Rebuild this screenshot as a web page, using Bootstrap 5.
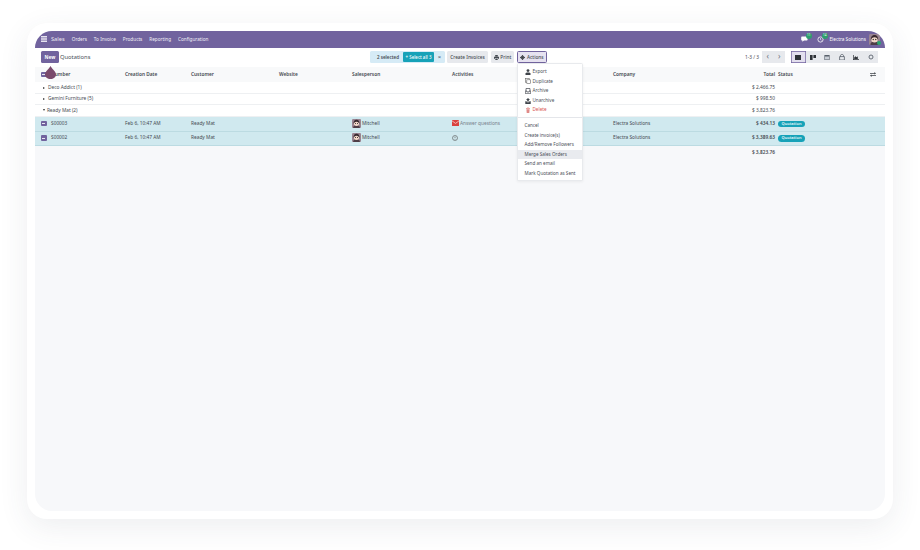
<!DOCTYPE html>
<html lang="en">
<head>
  <meta charset="UTF-8">
  <meta name="viewport" content="width=device-width, initial-scale=1.0">
  <title>Quotations</title>
  <link href="https://cdn.jsdelivr.net/npm/bootstrap@5.3.2/dist/css/bootstrap.min.css" rel="stylesheet">
  <style>
    html, body { height: 550px; overflow: hidden; }
    body { background: #fff; font-family: "Noto Sans", sans-serif; font-size: 4.8px; color: #454a51; }
    .frame { width: 866px; height: 496px; margin: 23px 0 0 27px; padding: 8px; background: #fff; border-radius: 20px; box-shadow: 0 8px 30px rgba(60,70,90,.09); }
    .screen { position: relative; height: 480px; background: #f7f8fa; border-radius: 17px; overflow: hidden; }
    .topbar { height: 16.5px; background: #71639e; color: #fff; padding: 0 5px 0 6px; font-size: 4.7px; }
    .topbar span { white-space: nowrap; }
    .brand { font-size: 5.7px; margin: 0 7px 0 4px; opacity: .85; }
    .menu-item { margin-right: 6.9px; opacity: .9; }
    .tool-badge { position: absolute; top: -2.5px; right: -4.5px; width: 6.5px; height: 5.5px; background: #2f9e6e; border-radius: 3px; font-size: 3px !important; line-height: 5.5px; text-align: center; color: #fff; }
    .tool-icon { position: relative; display: flex; width: 7px; height: 7px; }
    .gap-chat { margin-right: 9px; }
    .gap-clock { margin-right: 6px; }
    .panel { height: 19.5px; background: #fff; padding: 0 7px 0 6px; }
    .left-part { width: 329px; }
    .btn-new { width: 18px; height: 12px; padding: 0; font-size: 4.8px; font-weight: 700; line-height: 12px; background: #71639e; border: 0; border-radius: 1.5px; color: #fff; }
    .page-title { font-size: 5.8px; margin-left: 1px; color: #4a4f57; }
    .sel-box { width: 75px; height: 12px; background: #d6ebf6; border-radius: 1.5px; font-weight: 600; font-size: 4.5px; }
    .sel-count { width: 33px; text-align: right; padding-right: 4px; }
    .sel-all { width: 31px; height: 10px; background: #17a2b8; color: #fff; border-radius: 1px; line-height: 10px; text-align: center; font-size: 4.4px; font-weight: 500; }
    .sel-x { width: 11px; text-align: center; font-size: 6px; color: #5a6a85; }
    .btn-soft { height: 12px; padding: 0; font-size: 4.7px; line-height: 12px; background: #e7e9ed; border: 0; border-radius: 1.5px; color: #454a51; font-weight: 500; margin-left: 2px; display: inline-flex; align-items: center; justify-content: center; gap: 1.5px; }
    .w-inv { width: 41px; }
    .w-print { width: 23px; margin-left: 3px; }
    .w-act { width: 30px; margin-left: 3px; background: #e6e2f0; border: .7px solid #71639e; }
    .pager-txt { margin-right: 3px; }
    .pager-btn { width: 11.5px; height: 12px; background: #e7e9ed; text-align: center; line-height: 10.5px; font-size: 8px; color: #6b7280; }
    .view-group { margin-left: 6px; }
    .view-btn { width: 14.5px; height: 12px; background: #e7e9ed; display: flex; align-items: center; justify-content: center; }
    .view-btn.on { background: #e3dfee; box-shadow: inset 0 0 0 .7px #71639e; }
    table.quote { width: 850px; table-layout: fixed; border-collapse: separate; border-spacing: 0; margin: 0; font-size: 4.8px; }
    table.quote td, table.quote th { padding: 0; white-space: nowrap; vertical-align: middle; background: transparent; color: #454a51; box-shadow: none; border-bottom: 1px solid #eef0f2; }
    table.quote thead tr { height: 15px; }
    table.quote thead th { background: #f8f9fa; font-weight: 600; border: 0; }
    tr.grp { height: 11.7px; background: #fff; }
    tr.sel { height: 14.6px; background: #d0e9ef; }
    table.quote tr.sel td { border-bottom: 1px solid #bcdbe2; padding-bottom: 1px; }
    table.quote tr.foot td { border: 0; height: 12px; font-weight: 600; }
    .c-chk { width: 16px; } .c-num { width: 74px; } .c-date { width: 66px; } .c-cust { width: 88px; }
    .c-web { width: 73px; } .c-sale { width: 100px; } .c-act { width: 161px; } .c-comp { width: 87px; }
    .c-tot { width: 75px; } .c-stat { width: 95px; } .c-opt { width: 15px; }
    .tick { display: block; width: 5.5px; height: 5.5px; margin-left: 6px; background: #71639e; border-radius: 1px; position: relative; }
    .tick::after { content: ""; position: absolute; left: 1.3px; right: 1.3px; top: 2.3px; height: 1px; background: #e8e6f2; }
    .caret-r { display: inline-block; margin: 0 3px 0 8px; border-left: 2.5px solid #333; border-top: 1.6px solid transparent; border-bottom: 1.6px solid transparent; }
    .caret-d { display: inline-block; margin: 0 2.4px 1px 7.5px; border-top: 2.5px solid #333; border-left: 1.8px solid transparent; border-right: 1.8px solid transparent; }
    .state-pill { display: inline-block; width: 27px; height: 6.5px; line-height: 6.5px; border-radius: 4px; background: #17a2b8; color: #e8f8fb; font-size: 4px; text-align: center; margin-left: 3px; font-weight: 600; }
    .who { gap: 1px; }
    .muted-act { color: #77808a; }
    .pad-stat { padding-left: 3px !important; }
    .drip { position: absolute; left: 9.5px; top: 35px; width: 11px; height: 13px; }
    .act-menu { position: absolute; display: block; left: 481.5px; top: 32px; width: 66.5px; min-width: 0; height: 117.5px; padding: 3px 0 0; border: .6px solid #e8eaed; border-radius: 1.5px; box-shadow: 0 1px 3px rgba(0,0,0,.06); }
    .act-menu .dropdown-item { height: 9.6px; line-height: 9.6px; padding: 0 0 0 7px; font-size: 4.6px; color: #4b5057; display: flex; align-items: center; gap: 2px; }
    .act-menu .dropdown-item.hot { background: #e9ebef; }
    .act-menu .dropdown-item.danger { color: #d9534f; }
    .act-menu .dropdown-divider { margin: 2.4px 0 2.6px; border-color: #e4e6ea; opacity: 1; }
  </style>
</head>
<body>
  <svg width="0" height="0" class="position-absolute">
    <defs>
      <symbol id="face" viewBox="0 0 12 12">
        <rect width="12" height="12" rx="1.500" fill="#9a8491"/>
        <path d="M1.500 12c0-3 2-3.800 4.500-3.800s4.500.8 4.500 3.800z" fill="#4e3d46"/>
        <circle cx="6" cy="5.800" r="3.500" fill="#f3d8c9"/>
        <path d="M2.100 7C1.600 2.600 3.800 1 6 1s4.400 1.600 3.900 6C9.400 4.800 8.200 3.600 6 3.600S2.600 4.800 2.100 7z" fill="#3a2a30"/>
        <circle cx="4.600" cy="6" r=".7" fill="#222"/><circle cx="7.400" cy="6" r=".7" fill="#222"/>
      </symbol>
    </defs>
  </svg>

  <div class="frame">
    <div class="screen">
      <div class="topbar d-flex align-items-center">
        <svg width="6" height="6" viewBox="0 0 6 6"><path d="M0 0h6v1.400H0zM0 2.300h6v1.400H0zM0 4.600h6V6H0z" fill="#e6e3f0"/></svg>
        <span class="brand">Sales</span>
        <span class="menu-item">Orders</span>
        <span class="menu-item">To Invoice</span>
        <span class="menu-item">Products</span>
        <span class="menu-item">Reporting</span>
        <span class="menu-item">Configuration</span>
        <div class="ms-auto d-flex align-items-center">
          <div class="tool-icon gap-chat">
            <svg width="7" height="6" viewBox="0 0 7 6"><path d="M1.200.6h4.400c.6 0 1 .4 1 1v2c0 .6-.4 1-1 1H3L1.400 5.800V4.600h-.2c-.6 0-1-.4-1-1v-2c0-.6.4-1 1-1z" fill="#fff"/></svg>
            <span class="tool-badge">11</span>
          </div>
          <div class="tool-icon gap-clock">
            <svg width="7" height="7" viewBox="0 0 7 7"><circle cx="3.500" cy="3.500" r="2.600" fill="none" stroke="#fff" stroke-width=".8"/><path d="M3.500 2v1.600l1 .6" fill="none" stroke="#fff" stroke-width=".6"/></svg>
            <span class="tool-badge">14</span>
          </div>
          <span>Electra Solutions</span>
          <div class="tool-icon" style="width:11px;height:11px;margin-left:3px">
            <svg width="11" height="11"><use href="#face"/></svg>
            <span class="position-absolute rounded-circle" style="width:4px;height:4px;right:-.5px;bottom:-.5px;background:#2aa56f"></span>
          </div>
        </div>
      </div>

      <div class="panel d-flex align-items-center">
        <div class="left-part d-flex align-items-center">
          <button class="btn btn-new">New</button>
          <span class="page-title">Quotations</span>
        </div>
        <div class="d-flex align-items-center">
          <div class="sel-box d-flex align-items-center">
            <span class="sel-count">2 selected</span>
            <span class="sel-all">+ Select all 3</span>
            <span class="sel-x">×</span>
          </div>
          <button class="btn btn-soft w-inv">Create Invoices</button>
          <button class="btn btn-soft w-print"><svg width="5" height="5" viewBox="0 0 5 5"><path d="M1.200 0h2.600v1.400H1.200zM0 1.800h5v2H4V3H1v.8H0zM1.300 3.400h2.400V5H1.300z" fill="#454a51"/></svg>Print</button>
          <button class="btn btn-soft w-act"><svg width="5" height="5" viewBox="0 0 5 5"><circle cx="2.500" cy="2.500" r="1.500" fill="none" stroke="#2f3338" stroke-width="1"/><path d="M2.500 0v5M0 2.500h5" stroke="#2f3338" stroke-width=".7"/></svg>Actions</button>
        </div>
        <div class="ms-auto d-flex align-items-center">
          <span class="pager-txt">1-3 / 3</span>
          <span class="pager-btn">‹</span><span class="pager-btn">›</span>
          <div class="view-group d-flex">
            <span class="view-btn on"><svg width="6" height="5" viewBox="0 0 6 5"><rect width="6" height="5" fill="#2f3338"/></svg></span>
            <span class="view-btn"><svg width="6" height="5" viewBox="0 0 6 5"><path d="M0 0h2.600v5H0zM3.400 0H6v3H3.400z" fill="#2f3338"/></svg></span>
            <span class="view-btn"><svg width="6" height="6" viewBox="0 0 6 6"><path d="M.4 1h5.200v5H.4z" fill="#59616b"/><path d="M1 2.400h4v3H1z" fill="#c9ced6"/></svg></span>
            <span class="view-btn"><svg width="6" height="6" viewBox="0 0 6 6"><path d="M1.500 2.600V1.600C1.500.8 2.200.4 3 .4s1.500.4 1.500 1.200v1M.6 2.600h4.800V6H.6z" fill="none" stroke="#59616b" stroke-width=".8"/></svg></span>
            <span class="view-btn"><svg width="6" height="5" viewBox="0 0 6 5"><path d="M0 0h.7v4.300H6V5H0zM1.200 3.900V2.400l1.200-1.200 1.200 1 1.200-1v2.700z" fill="#2f3338"/></svg></span>
            <span class="view-btn"><svg width="6" height="6" viewBox="0 0 6 6"><circle cx="3" cy="3" r="2" fill="none" stroke="#59616b" stroke-width=".9"/></svg></span>
          </div>
        </div>
      </div>

      <table class="table quote">
        <colgroup>
          <col class="c-chk"><col class="c-num"><col class="c-date"><col class="c-cust"><col class="c-web"><col class="c-sale"><col class="c-act"><col class="c-comp"><col class="c-tot"><col class="c-stat"><col class="c-opt">
        </colgroup>
        <thead>
          <tr>
            <th><span class="tick"></span></th><th>Number</th><th>Creation Date</th><th>Customer</th><th>Website</th><th>Salesperson</th><th>Activities</th><th>Company</th><th class="text-end">Total</th><th class="pad-stat">Status</th>
            <th><svg width="6" height="5" viewBox="0 0 6 5"><path d="M0 1h4.400V0L6 1.400 4.400 2.600v-.9H0zM6 3.300H1.600v-.9L0 3.600 1.600 5V4H6z" fill="#3f444a"/></svg></th>
          </tr>
        </thead>
        <tbody>
          <tr class="grp"><td colspan="8"><span class="caret-r"></span>Deco Addict (1)</td><td class="text-end">$ 2,466.75</td><td colspan="2"></td></tr>
          <tr class="grp"><td colspan="8"><span class="caret-r"></span>Gemini Furniture (5)</td><td class="text-end">$ 998.50</td><td colspan="2"></td></tr>
          <tr class="grp"><td colspan="8"><span class="caret-d"></span>Ready Mat (2)</td><td class="text-end">$ 3,823.76</td><td colspan="2"></td></tr>
          <tr class="sel">
            <td><span class="tick"></span></td><td>S00003</td><td>Feb 6, 10:47 AM</td><td>Ready Mat</td><td></td>
            <td><div class="d-flex align-items-center who"><svg width="9" height="9"><use href="#face"/></svg><span>Mitchell</span></div></td>
            <td><div class="d-flex align-items-center muted-act"><svg width="7" height="6" viewBox="0 0 7 6" class="me-1"><rect width="7" height="6" fill="#d9423f"/><path d="M0 .8l3.500 2.600L7 .8" fill="none" stroke="#fff" stroke-width=".6"/></svg><span style="margin-left:-3px">Answer questions</span></div></td>
            <td>Electra Solutions</td><td class="text-end fw-semibold">$ 434.13</td><td><span class="state-pill">Quotation</span></td><td></td>
          </tr>
          <tr class="sel">
            <td><span class="tick"></span></td><td>S00002</td><td>Feb 6, 10:47 AM</td><td>Ready Mat</td><td></td>
            <td><div class="d-flex align-items-center who"><svg width="9" height="9"><use href="#face"/></svg><span>Mitchell</span></div></td>
            <td><svg width="6" height="6" viewBox="0 0 6 6"><circle cx="3" cy="3" r="2.500" fill="none" stroke="#555" stroke-width=".6"/><path d="M3 1.600v1.600" stroke="#555" stroke-width=".6"/><circle cx="3" cy="4.200" r=".35" fill="#555"/></svg></td>
            <td>Electra Solutions</td><td class="text-end fw-semibold">$ 3,389.63</td><td><span class="state-pill">Quotation</span></td><td></td>
          </tr>
          <tr class="foot"><td colspan="8"></td><td class="text-end">$ 3,823.76</td><td colspan="2"></td></tr>
        </tbody>
      </table>

      <svg class="drip" viewBox="0 0 11 13"><path d="M5.500 0C7 3 11 5.500 11 8.500 11 11 8.500 13 5.500 13S0 11 0 8.500C0 5.500 4 3 5.500 0z" fill="#7a4a6c"/></svg>

      <div class="dropdown-menu act-menu">
        <a class="dropdown-item"><svg width="6" height="6" viewBox="0 0 6 6"><circle cx="3" cy="1.600" r="1.400" fill="#3f444a"/><path d="M.5 6V4.500C.5 3.800 1.500 3.400 3 3.400s2.500.4 2.500 1.100V6z" fill="#3f444a"/></svg>Export</a>
        <a class="dropdown-item"><svg width="6" height="6" viewBox="0 0 6 6"><rect x=".4" y=".4" width="3.800" height="3.800" fill="none" stroke="#666" stroke-width=".6"/><rect x="1.800" y="1.800" width="3.800" height="3.800" fill="#fff" stroke="#666" stroke-width=".6"/></svg>Duplicate</a>
        <a class="dropdown-item"><svg width="6" height="6" viewBox="0 0 6 6"><path d="M1 3V.5h4V3M.3 3h1.500v1h2.400V3h1.500v2.700H.3z" fill="none" stroke="#3f444a" stroke-width=".7"/></svg>Archive</a>
        <a class="dropdown-item"><svg width="6" height="6" viewBox="0 0 6 6"><path d="M3 0L5 2H3.800v1.500H2.200V2H1zM.3 3.300h1.400v1h2.600v-1h1.400V6H.3z" fill="#3f444a"/></svg>Unarchive</a>
        <a class="dropdown-item danger"><svg width="6" height="6" viewBox="0 0 6 6"><path d="M1 1.200h4v.7H1zM2.200.4h1.600v.6H2.200zM1.400 2.200h3.200L4.300 6H1.700z" fill="#e08a88"/></svg>Delete</a>
        <hr class="dropdown-divider">
        <a class="dropdown-item">Cancel</a>
        <a class="dropdown-item">Create invoice(s)</a>
        <a class="dropdown-item">Add/Remove Followers</a>
        <a class="dropdown-item hot">Merge Sales Orders</a>
        <a class="dropdown-item">Send an email</a>
        <a class="dropdown-item">Mark Quotation as Sent</a>
      </div>
    </div>
  </div>

  <script src="https://cdn.jsdelivr.net/npm/bootstrap@5.3.2/dist/js/bootstrap.bundle.min.js"></script>
</body>
</html>
